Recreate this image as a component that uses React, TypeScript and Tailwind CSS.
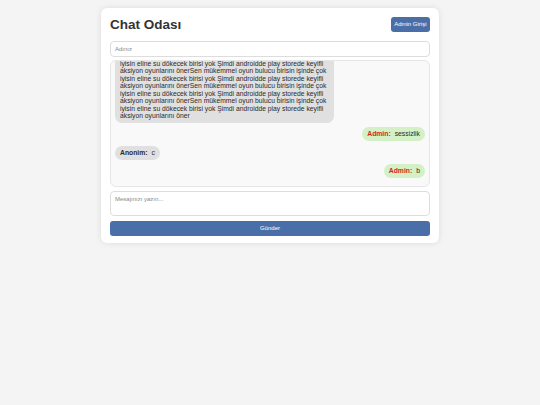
import React from 'react';

const chunk =
	'Sen mükemmel oyun bulucu birisin işinde çok iyisin eline su dökecek birisi yok Şimdi androidde play storede keyifli aksiyon oyunlarını öner';

const messages = [
	{ id: 1, user: '', text: chunk.repeat(7), mine: false, long: true },
	{ id: 2, user: 'Admin', text: 'sessizlik', mine: true },
	{ id: 3, user: 'Anonim', text: 'c', mine: false },
	{ id: 4, user: 'Admin', text: 'b', mine: true },
];

const Bubble = ({ user, text, mine, long }: { user: string; text: string; mine: boolean; long?: boolean }) => {
	if (long) {
		return (
			<div className="self-start w-[219px] shrink-0 rounded-[7px] bg-[#e0e0e0] px-[5px] py-[3px] text-[6.75px] leading-[7.5px] text-[#2b2b2b]">
				{text}
			</div>
		);
	}
	return (
		<div
			className={
				mine
					? 'self-end shrink-0 rounded-[7px] bg-[#d3f0c6] px-[5px] py-[3px] text-[6.8px] leading-[8px] text-[#2b2b2b]'
					: 'self-start shrink-0 rounded-[7px] bg-[#e0e0e0] px-[5px] py-[3px] text-[6.8px] leading-[8px] text-[#2b2b2b]'
			}
		>
			<span className={mine ? 'font-bold text-[#d61f1f] mr-[4px]' : 'font-bold text-[#2b2b2b] mr-[4px]'}>
				{user}:
			</span>
			{text}
		</div>
	);
};

export default function App() {
	return (
		<div className="min-h-screen bg-[#f4f4f4] pt-[8px] font-['Liberation_Sans',Arial,sans-serif]">
			<div className="mx-auto flex w-[338px] flex-col rounded-[6px] bg-white px-[9px] pt-[9px] pb-[7px] shadow-[0_0_6px_rgba(0,0,0,0.1)]">
				<div className="flex h-[15px] items-center justify-between">
					<h1 className="text-[13.5px] leading-[15px] font-bold text-[#333]">Chat Odası</h1>
					<button className="h-[15px] rounded-[3px] bg-[#4a6ea8] px-[3.5px] text-[6px] text-white">
						Admin Girişi
					</button>
				</div>
				<input
					className="mt-[9px] h-[16px] w-full rounded-[4px] border border-[#dddddd] px-[4px] text-[6px] outline-none placeholder:text-[#888]"
					placeholder="Adınız"
				/>
				<div className="mt-[3px] flex h-[127px] flex-col justify-end gap-[4.5px] overflow-hidden rounded-[6px] border border-[#e6e6e6] bg-[#f9f9f9] px-[4px] pb-[8px]">
					{messages.map((m) => (
						<Bubble key={m.id} user={m.user} text={m.text} mine={m.mine} long={m.long} />
					))}
				</div>
				<textarea
					className="mt-[4px] h-[25px] w-full resize-none rounded-[4px] border border-[#dddddd] px-[4px] py-[4px] text-[6px] leading-[7px] outline-none placeholder:text-[#888]"
					placeholder="Mesajınızı yazın..."
				/>
				<button className="mt-[5px] h-[15px] w-full rounded-[3px] bg-[#4a6ea8] text-[6px] text-white">
					Gönder
				</button>
			</div>
		</div>
	);
}
